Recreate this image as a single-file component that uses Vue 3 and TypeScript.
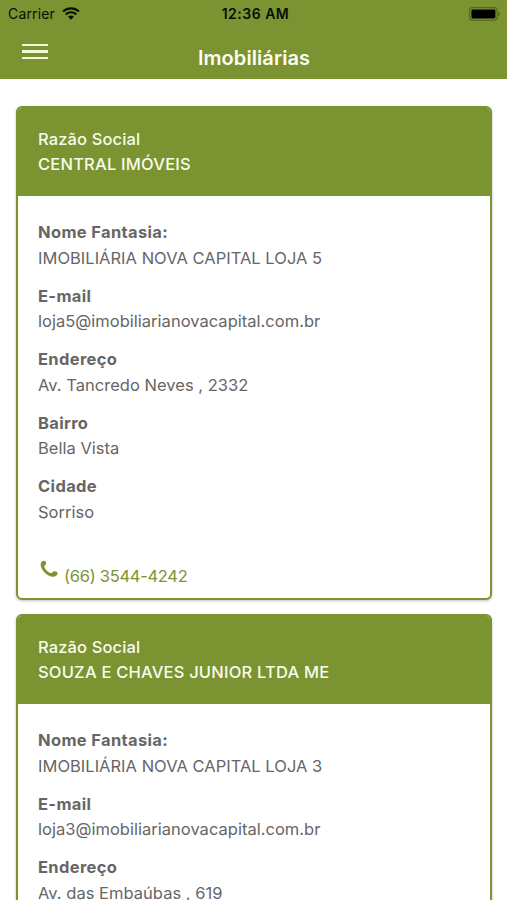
<script setup lang="ts">
interface Field {
  label: string
  value: string
}

interface Agency {
  id: number
  name: string
  fields: Field[]
  phone: string
}

const agencies: Agency[] = [
  {
    id: 1,
    name: 'CENTRAL IMÓVEIS',
    fields: [
      { label: 'Nome Fantasia:', value: 'IMOBILIÁRIA NOVA CAPITAL LOJA 5' },
      { label: 'E-mail', value: 'loja5@imobiliarianovacapital.com.br' },
      { label: 'Endereço', value: 'Av. Tancredo Neves , 2332' },
      { label: 'Bairro', value: 'Bella Vista' },
      { label: 'Cidade', value: 'Sorriso' },
    ],
    phone: '(66) 3544-4242',
  },
  {
    id: 2,
    name: 'SOUZA E CHAVES JUNIOR LTDA ME',
    fields: [
      { label: 'Nome Fantasia:', value: 'IMOBILIÁRIA NOVA CAPITAL LOJA 3' },
      { label: 'E-mail', value: 'loja3@imobiliarianovacapital.com.br' },
      { label: 'Endereço', value: 'Av. das Embaúbas , 619' },
    ],
    phone: '',
  },
]
</script>

<template>
  <div class="screen">
    <header class="top">
      <div class="status">
        <div class="carrier">
          <span>Carrier</span>
          <svg class="wifi" viewBox="0 0 18 13" aria-hidden="true">
            <path d="M1 4.6a11.6 11.6 0 0 1 16 0" />
            <path d="M3.7 7.4a7.7 7.7 0 0 1 10.6 0" />
            <path class="dot" d="M9 12.7 6.1 9.8a4.2 4.2 0 0 1 5.8 0z" />
          </svg>
        </div>
        <span class="clock">12:36 AM</span>
        <svg class="battery" viewBox="0 0 32 14" aria-hidden="true">
          <rect class="shell" x=".6" y=".6" width="27.6" height="12.6" rx="3" />
          <rect x="2.4" y="2.4" width="24" height="9" rx="1.4" />
          <path class="tip" d="M29.5 4.8c1.6.5 1.6 3.7 0 4.2z" />
        </svg>
      </div>
      <div class="nav">
        <button class="menu" aria-label="Menu"><i></i><i></i><i></i></button>
        <h1>Imobiliárias</h1>
      </div>
    </header>

    <main class="list">
      <article v-for="agency in agencies" :key="agency.id" class="card">
        <header class="card-head">
          <div class="caption">Razão Social</div>
          <div class="name">{{ agency.name }}</div>
        </header>
        <dl class="fields">
          <div v-for="field in agency.fields" :key="field.label" class="field">
            <dt>{{ field.label }}</dt>
            <dd>{{ field.value }}</dd>
          </div>
        </dl>
        <a v-if="agency.phone" class="phone">
          <svg viewBox="0 0 18 18" aria-hidden="true">
            <path d="M1.500 2C2.500.6 4.500.2 5.500 1.300c.8 1 .9 2.400.3 3.300-.4.600-1.200.7-1.400 1.300-.4 1.200 1.200 3.600 2.800 5 1.600 1.400 3.500 2.500 4.700 2 .7-.3.7-1.200 1.400-1.500 1-.5 2.600-.2 3.600.6 1.100.9.8 2.700-.7 3.800-1.800 1.400-4.600 1.300-7.500-.2C5.600 13.900 2.900 11.100 1.500 8 .4 5.500.4 3.400 1.500 2z" />
          </svg>
          <span>{{ agency.phone }}</span>
        </a>
      </article>
    </main>
  </div>
</template>

<style>
body {
  background: #fff;
}
</style>

<style scoped>
.screen {
  height: 900px;
  overflow: hidden;
  background: #fff;
  color: #666;
  font-family: Inter, sans-serif;
  font-size: 16.5px;
}

.top {
  box-sizing: border-box;
  height: 79px;
  background: #7b9331;
}

.status {
  display: grid;
  grid-template-columns: 1fr auto 1fr;
  align-items: center;
  box-sizing: border-box;
  height: 27px;
  padding: 0 6px 0 8px;
  color: #0b0e04;
  font-size: 14px;
}

.carrier {
  display: flex;
  align-items: center;
  gap: 7px;
  letter-spacing: 0.15px;
}

.wifi {
  width: 18px;
  height: 13px;
  fill: none;
  stroke: #0b0e04;
  stroke-width: 2.1;
}

.wifi .dot {
  fill: #0b0e04;
  stroke: none;
}

.clock {
  padding-left: 2px;
  font-weight: 600;
  letter-spacing: 0.5px;
}

.battery {
  justify-self: end;
  width: 32px;
  height: 14px;
  fill: #000;
}

.battery .shell {
  fill: none;
  stroke: #55661f;
  stroke-width: 1.1;
}

.battery .tip {
  fill: #46551a;
}

.nav {
  display: grid;
  grid-template-columns: 56px 1fr 56px;
  height: 52px;
}

.menu {
  display: flex;
  flex-direction: column;
  gap: 4px;
  padding: 17px 0 0 22px;
  border: 0;
  background: none;
}

.menu i {
  width: 26px;
  height: 2.4px;
  background: #f2f8dc;
}

h1 {
  margin: 0;
  padding: 18px 0 0 1px;
  color: #fbfdf3;
  font-size: 20px;
  font-weight: 600;
  letter-spacing: 0.08px;
  line-height: 26px;
  text-align: center;
}

.list {
  display: flex;
  flex-direction: column;
  gap: 14.5px;
  padding: 27px 15px 0 15.5px;
}

.card {
  box-sizing: border-box;
  flex: none;
  height: 493.5px;
  overflow: hidden;
  border: 2px solid #7b9331;
  border-radius: 6px;
  background: #fff;
  box-shadow: 0 1px 3px rgb(0 0 0 / 25%);
}

.card-head {
  box-sizing: border-box;
  height: 88px;
  padding: 19px 20.5px 0;
  background: #7b9331;
  color: #f8fced;
  font-weight: 500;
  line-height: 24.5px;
}

.caption {
  letter-spacing: 0.12px;
}

.name {
  letter-spacing: 0.2px;
}

.fields {
  display: flex;
  flex-direction: column;
  gap: 12.5px;
  margin: 0;
  padding: 24px 20.5px 0;
  line-height: 25.5px;
}

dt {
  font-weight: 700;
  letter-spacing: 0.35px;
}

dd {
  margin: 0;
  letter-spacing: 0.02px;
}

.phone {
  display: flex;
  gap: 6px;
  padding: 35px 22.5px 0;
  color: #7b9331;
}

.phone svg {
  width: 18px;
  height: 18px;
  fill: currentColor;
}

.phone span {
  padding-top: 6px;
  letter-spacing: -0.28px;
  line-height: 20px;
}
</style>
